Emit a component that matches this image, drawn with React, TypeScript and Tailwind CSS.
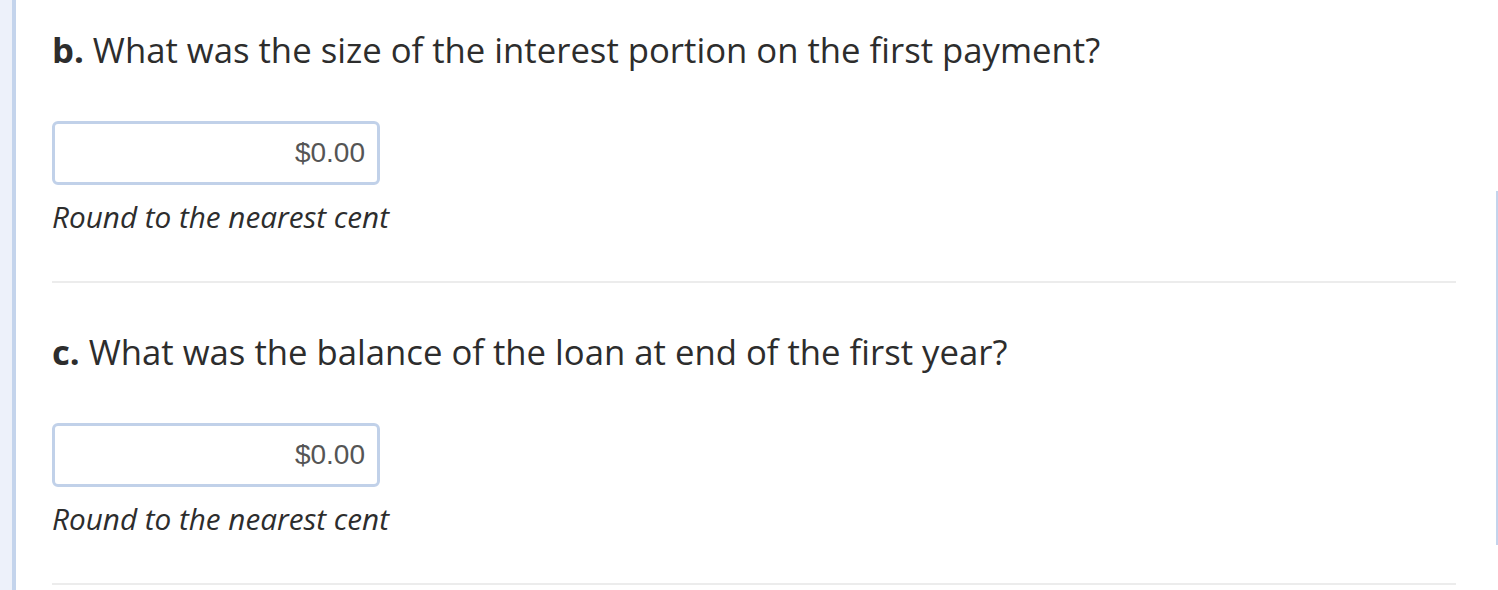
import React from 'react';

const questions = [
  { label: 'b.', text: 'What was the size of the interest portion on the first payment?' },
  { label: 'c.', text: 'What was the balance of the loan at end of the first year?' },
];

const Question: React.FC<{ label: string; text: string }> = ({ label, text }) => (
  <div className="border-b-2 border-[#ececec] pt-[43px] pb-[44px]">
    <h2 className="text-[34.7px] leading-[52px] text-[#2d2d2d]">
      <span className="font-bold">{label}</span> {text}
    </h2>
    <div className="mt-[45px] w-[328px] h-[64px] rounded-[6px] border-[3px] border-[#c1d1e9] bg-white flex items-center justify-end pr-[12px]">
      <span className="text-[28px] text-[#555555] font-['Liberation_Sans',Arial,sans-serif]">$0.00</span>
    </div>
    <p className="mt-[12px] text-[29.7px] leading-[40px] italic text-[#2d2d2d]">Round to the nearest cent</p>
  </div>
);

export default function App() {
  return (
    <div className="relative flex h-[590px] w-[1498px] overflow-hidden bg-white font-['Open_Sans',sans-serif]">
      <div className="w-[12px] bg-[#edf1fa]" />
      <div className="w-[4px] bg-[#c4d4ec]" />
      <div className="flex-1 pl-[36px] pr-[42px] -mt-[19px]">
        {questions.map((q) => (
          <Question key={q.label} label={q.label} text={q.text} />
        ))}
      </div>
      <div className="absolute right-0 top-[191px] h-[354px] w-[2px] bg-[#c4d4ec]" />
    </div>
  );
}
